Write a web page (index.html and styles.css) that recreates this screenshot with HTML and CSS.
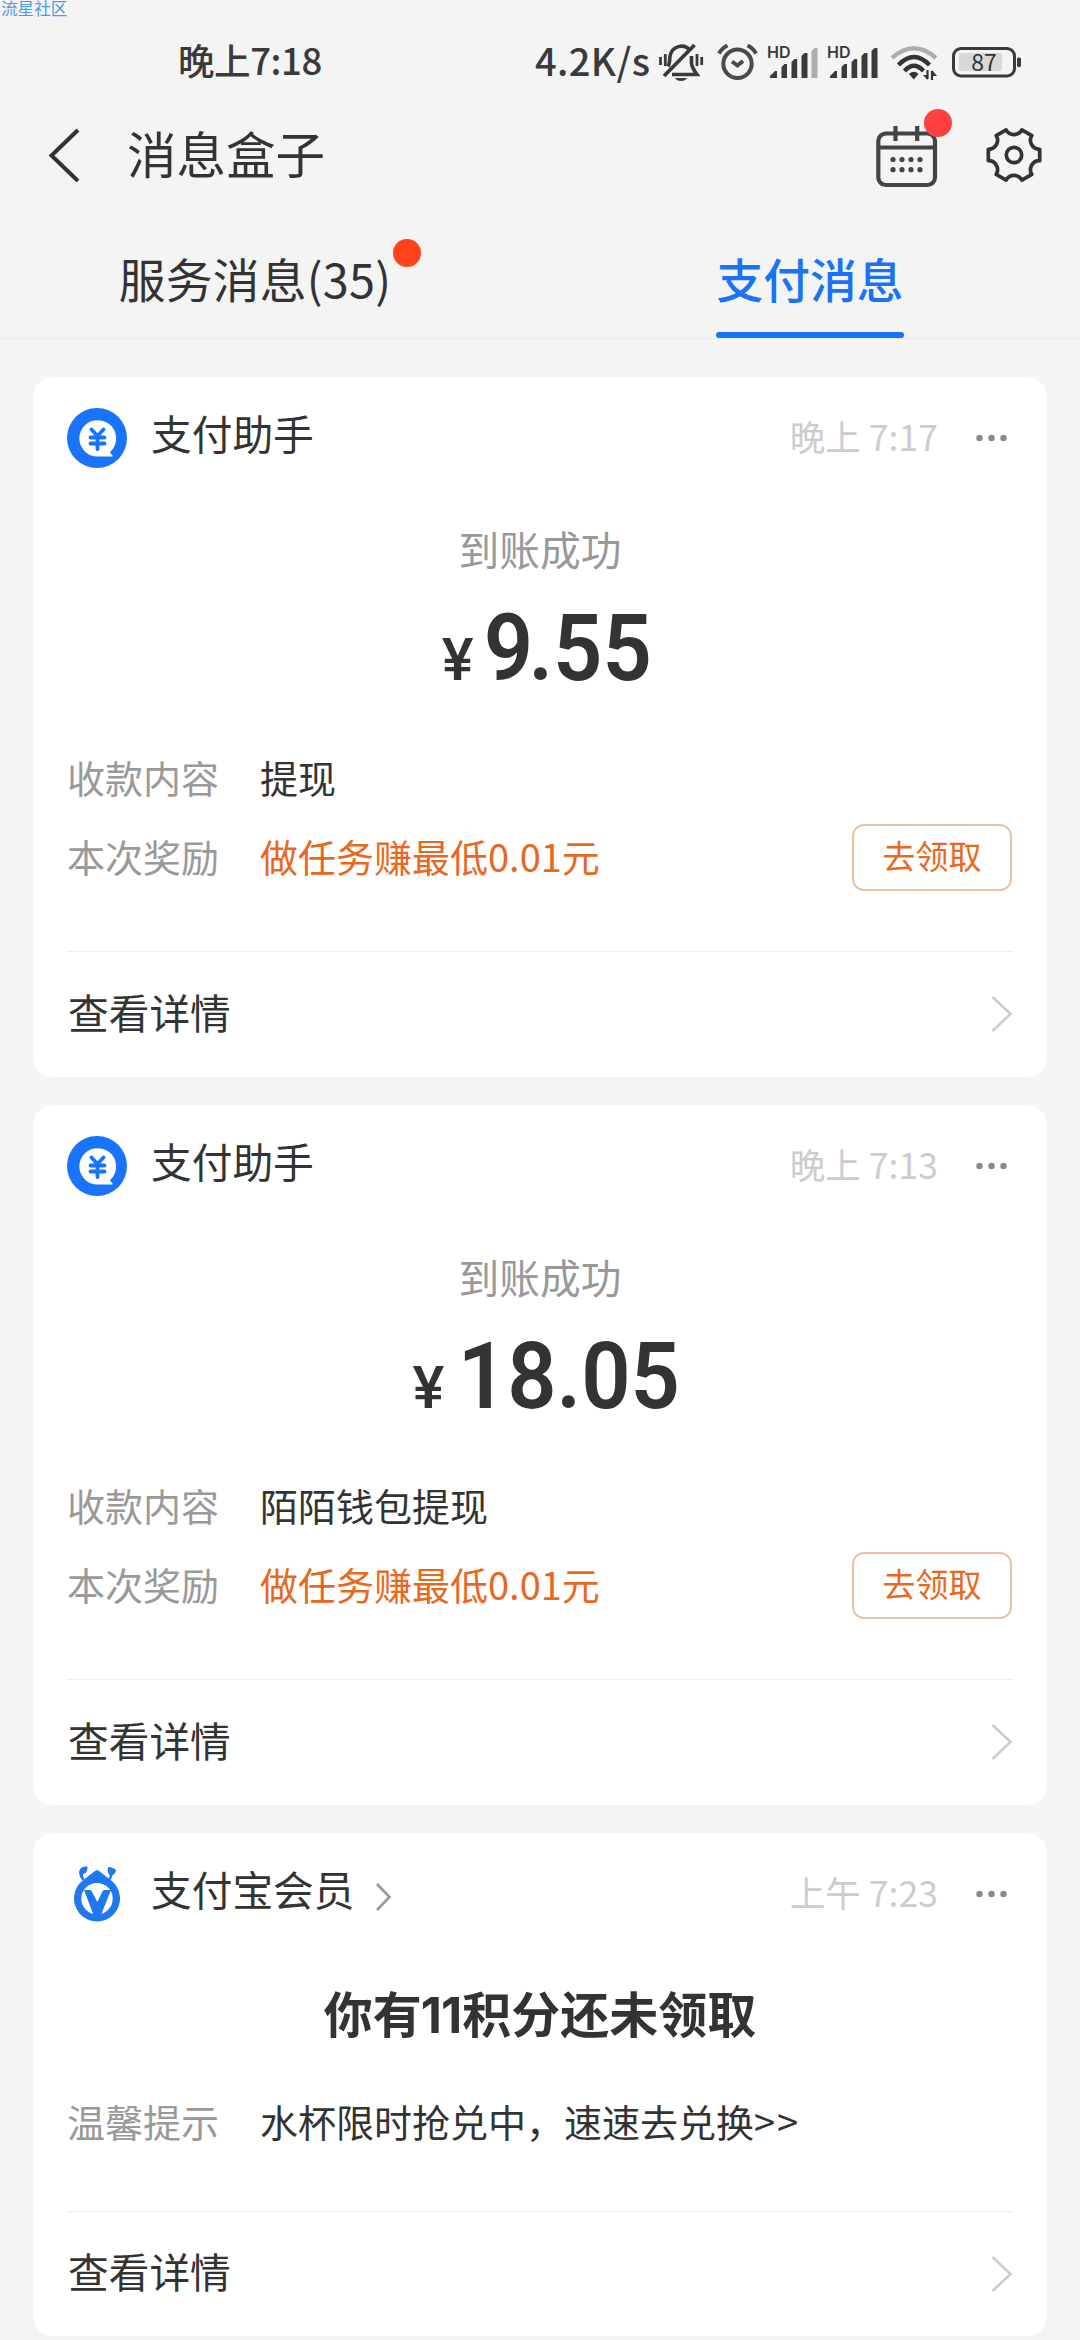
FILE: index.html
```html
<!DOCTYPE html>
<html lang="zh-CN">
<head>
<meta charset="utf-8">
<title>消息盒子</title>
<link rel="stylesheet" href="styles.css">
</head>
<body>
<svg class="defs" width="0" height="0" aria-hidden="true">
  <symbol id="pay" viewBox="0 0 60 60">
    <circle cx="30" cy="30" r="30" fill="#1a73fb"/>
    <path d="M30.500 12.200a18.200 18.200 0 1 0 0 36.400h14.200c1.300 0 1.200-1 .4-1.700l-2.200-2.700a18.200 18.200 0 0 0-12.400-32z" fill="#fff"/>
    <path d="M24.500 21.500l6 6.500 6-6.500M23.500 29.500h14M23.500 35.500h14M30.500 28v13" fill="none" stroke="#1a73fb" stroke-width="3.800" stroke-linecap="round"/>
  </symbol>
  <symbol id="next" viewBox="0 0 22 36">
    <path d="M1.500 1l18 17-18 17" fill="none" stroke="#ccc" stroke-width="2.600"/>
  </symbol>
  <symbol id="more" viewBox="0 0 38 8">
    <g fill="#8a8a8a"><circle cx="4.500" cy="4" r="3.200"/><circle cx="16.500" cy="4" r="3.200"/><circle cx="28.500" cy="4" r="3.200"/></g>
  </symbol>
</svg>

<div class="watermark">流星社区</div>

<div class="status">
  <span class="clock">晚上7:18</span>
  <span class="speed">4.2K/s</span>
  <svg class="i-mute" width="50" height="44" viewBox="656 40 50 44" fill="none" stroke="#3a3a3a" stroke-width="3.600">
    <path d="M664 76l30.500-31" stroke-width="3.800"/>
    <path d="M668 66.500c2-3 1.500-7 2-10.500 2-10 14-13 19.500-6M691.500 56v7c.5 5 3 8 5.500 11.500H672"/>
    <path d="M675 78h12c-2 4-10 4-12 0z" fill="#3a3a3a" stroke="none"/>
    <path d="M660.500 57v8M665.300 54v12M697 54v12M701.700 57v8" stroke-width="2.800"/>
  </svg>
  <svg class="i-alarm" width="42" height="44" viewBox="716 40 42 44" fill="none" stroke="#4a4a4a" stroke-width="4">
    <circle cx="737.500" cy="63.800" r="14.200"/>
    <path d="M719 53.500q3-5.500 8.500-8M747.500 45.500q5.500 2.500 8.500 8M732 61.500l5.500 4 5.500-4.500"/>
  </svg>
  <svg class="i-signal" width="54" height="44" viewBox="766 40 54 44" fill="#3a3a3a">
    <text class="hd" x="767" y="58">HD</text>
    <path d="M770 78v-2l5-5h2v7zM781.500 78V67l3-3h2.500v14zM791.500 78V62l3-3h2.700v19zM801.500 78V56l3-3h3v25z"/>
    <path d="M811.500 78V51l3-3h3v30z" fill="#adadad"/>
  </svg>
  <svg class="i-signal" width="54" height="44" viewBox="766 40 54 44" fill="#3a3a3a">
    <text class="hd" x="767" y="58">HD</text>
    <path d="M770 78v-2l5-5h2v7zM781.500 78V67l3-3h2.500v14zM791.500 78V62l3-3h2.700v19zM801.500 78V56l3-3h3v25zM811.500 78V51l3-3h3v30z"/>
  </svg>
  <svg class="i-wifi" width="50" height="44" viewBox="889 40 50 44" fill="none" stroke="#333" stroke-width="4.400">
    <path d="M892 58q22-19.500 44 0" stroke="#adadad"/>
    <path d="M898.500 65q15.500-16 31 0M904.500 71q9.500-10.500 19 0"/>
    <path d="M909 74q5-4.500 9.500 0l-4.700 5.500z" fill="#333" stroke="none"/>
    <path d="M927.500 70v9M932 80v-9" stroke-width="2.200"/>
    <path d="M923 75h4.500v5zM937 76h-5v-6z" fill="#333" stroke="none"/>
  </svg>
  <svg class="i-battery" width="72" height="44" viewBox="950 40 72 44">
    <rect x="953.500" y="48.500" width="61" height="27.500" rx="7.500" fill="none" stroke="#3a3a3a" stroke-width="3"/>
    <rect x="959" y="53" width="43" height="18" rx="2" fill="#d8d8d8"/>
    <rect x="1017" y="57.500" width="4" height="9.500" rx="1.500" fill="#3a3a3a"/>
    <text class="pct" x="984" y="70.500" text-anchor="middle">87</text>
  </svg>
</div>

<header class="bar">
  <svg width="34" height="54" viewBox="0 0 34 54"><path d="M32 2L5.500 27.500 32 53" fill="none" stroke="#333" stroke-width="4"/></svg>
  <h1 class="title">消息盒子</h1>
  <span class="cal">
    <svg width="64" height="64" viewBox="875 125 64 64" fill="none" stroke="#444" stroke-width="4.200">
      <rect x="878.300" y="133.500" width="56.700" height="51.500" rx="7.500"/>
      <path d="M878 147.500h57M895.500 126v15M917.200 126v15" />
      <g fill="#444" stroke="none"><circle cx="893" cy="159.500" r="2.600"/><circle cx="902" cy="159.500" r="2.600"/><circle cx="911" cy="159.500" r="2.600"/><circle cx="920" cy="159.500" r="2.600"/><circle cx="893" cy="169.700" r="2.600"/><circle cx="902" cy="169.700" r="2.600"/><circle cx="911" cy="169.700" r="2.600"/><circle cx="920" cy="169.700" r="2.600"/></g>
    </svg>
    <i class="dot cal-dot"></i>
  </span>
  <svg class="gear" width="60" height="60" viewBox="-30 -30 60 60" fill="none" stroke="#333" stroke-width="3.700" stroke-linejoin="round">
    <path d="M25.700-5.700V5.700A9 9 0 0 0 17.800 19.400L7.900 25.100A9 9 0 0 0-7.900 25.100L-17.800 19.400A9 9 0 0 0-25.700 5.700V-5.700A9 9 0 0 0-17.800-19.400L-7.900-25.100A9 9 0 0 0 7.900-25.100L17.800-19.400A9 9 0 0 0 25.700-5.700z"/>
    <circle r="7.700"/>
  </svg>
</header>

<nav class="tabs">
  <div class="tab"><span class="off">服务消息(35)</span><i class="dot tab-dot"></i></div>
  <div class="tab"><span class="on">支付消息</span></div>
</nav>

<main class="feed">
  <article class="card">
    <div class="head">
      <svg class="avatar"><use href="#pay"/></svg>
      <span class="name">支付助手</span>
      <span class="time">晚上 7:17</span>
      <svg class="more"><use href="#more"/></svg>
    </div>
    <div class="state">到账成功</div>
    <div class="amount"><span class="yen">¥</span><span class="num"><span class="kern">9</span>.55</span></div>
    <div class="row"><span class="key">收款内容</span><span class="val">提现</span></div>
    <div class="row"><span class="key">本次奖励</span><span class="val reward">做任务赚最低0.01元</span><span class="btn"><span>去领取</span></span></div>
    <div class="foot"><span class="link">查看详情</span><svg class="next"><use href="#next"/></svg></div>
  </article>

  <article class="card">
    <div class="head">
      <svg class="avatar"><use href="#pay"/></svg>
      <span class="name">支付助手</span>
      <span class="time">晚上 7:13</span>
      <svg class="more"><use href="#more"/></svg>
    </div>
    <div class="state">到账成功</div>
    <div class="amount"><span class="yen">¥</span><span class="num">18.05</span></div>
    <div class="row"><span class="key">收款内容</span><span class="val">陌陌钱包提现</span></div>
    <div class="row"><span class="key">本次奖励</span><span class="val reward">做任务赚最低0.01元</span><span class="btn"><span>去领取</span></span></div>
    <div class="foot"><span class="link">查看详情</span><svg class="next"><use href="#next"/></svg></div>
  </article>

  <article class="card">
    <div class="head">
      <svg class="avatar" viewBox="0 0 60 60" fill="#1f78f0">
        <path fill-rule="evenodd" d="M30 6Q32 6.500 34 8.500L43 15.500A23 23 0 1 1 17 15.500L26 8.500Q28 6.500 30 6zM30 19a15.700 15.700 0 1 0 0 31.400a15.700 15.700 0 0 0 0-31.400z"/>
        <path d="M17 26h5.500q1.500 0 2.200 1.300L30.300 38l5.200-10.700Q36.200 26 37.700 26H44L34 51h-7.500z"/>
        <path d="M20.500 2.800c-5-1-8.500 1.700-8.300 6.200.1 3 1.200 5.200 3.300 7.500l2-1.500c-1.300-2-1.700-3-1.500-5 3 0 4.500-3 4.500-7.200zM41 3c3.500.3 6 1.200 8 3-.5 3-2 4.500-4 5.500 0 2-.5 3.500-2 5l-1.700-1.500c1.200-1.500 1.500-2.500 1.200-4-1.800-2.300-2.300-4.700-1.500-8z"/>
      </svg>
      <span class="name">支付宝会员</span>
      <svg class="chev" width="16" height="28" viewBox="0 0 16 28"><path d="M1 1l12.500 13L1 27" fill="none" stroke="#999" stroke-width="2.600"/></svg>
      <span class="time">上午 7:23</span>
      <svg class="more"><use href="#more"/></svg>
    </div>
    <h2 class="headline">你有<span class="ones">11</span>积分还未领取</h2>
    <div class="row"><span class="key">温馨提示</span><span class="val">水杯限时抢兑中，速速去兑换<span class="arrows">&gt;&gt;</span></span></div>
    <div class="foot short"><span class="link">查看详情</span><svg class="next"><use href="#next"/></svg></div>
  </article>
</main>
</body>
</html>
```
FILE: styles.css
```css
* { box-sizing: border-box; margin: 0; padding: 0; }

body {
  position: relative;
  width: 1080px;
  height: 2340px;
  overflow: hidden;
  background: #f4f4f4;
  color: #333;
  font-family: "Noto Sans CJK SC", sans-serif;
  white-space: nowrap;
}

svg { display: block; flex: none; }
.defs { position: absolute; }
.dot { display: block; border-radius: 50%; }

.watermark {
  position: absolute;
  left: 1px;
  top: 0;
  font-size: 16.6px;
  line-height: 16px;
  color: #4a9bea;
}

/* status bar */
.status {
  display: flex;
  align-items: center;
  height: 84px;
  padding: 40px 0 0 178px;
}
.clock, .speed { line-height: 40px; margin-top: -4px; font-weight: 500; color: #3a3a3a; }
.clock { width: 357px; font-size: 36.5px; letter-spacing: -0.4px; }
.speed { width: 121px; font-size: 38px; letter-spacing: 0.4px; }
.i-alarm { margin-left: 10px; }
.i-signal { margin-left: 8px; }
.i-signal + .i-signal { margin-left: 6px; }
.i-wifi { margin-left: 9px; }
.i-battery { margin-left: 11px; }
.hd { font: 600 16px Inter, sans-serif; }
.pct { font: 400 23px "Noto Sans CJK SC", sans-serif; fill: #333; }

/* title bar */
.bar {
  display: flex;
  align-items: center;
  height: 142px;
  padding: 0 36px 0 46px;
}
.title { margin: -4px auto 0 47px; font-size: 49.5px; font-weight: 400; line-height: 60px; }
.cal { position: relative; }
.cal svg { margin-top: 4px; }
.cal-dot { position: absolute; left: 49px; top: -12px; width: 28px; height: 28px; background: #ff4040; }
.gear { margin-left: 45px; }

/* tabs */
.tabs {
  display: flex;
  height: 113px;
  border-bottom: 1px solid #ebebeb;
  font-size: 46.8px;
  line-height: 103px;
}
.tab { flex: 1; display: flex; justify-content: center; }
.off { letter-spacing: 0.2px; }
.tab-dot { width: 28px; height: 28px; margin: 13px 0 0 2px; background: #ff411c; }
.on { position: relative; color: #1a73f5; font-weight: 500; }
.on::after {
  content: "";
  position: absolute;
  left: 0;
  right: 0;
  bottom: 0;
  height: 6px;
  border-radius: 3px;
  background: #1a73f5;
}

/* cards */
.feed { display: flex; flex-direction: column; gap: 28.5px; padding: 38px 33px 0; }
.card { padding: 0 34px; border-radius: 20px; background: #fff; }
.head { display: flex; align-items: center; height: 122px; }
.avatar { width: 60px; height: 60px; }
.name { margin: -10px 0 0 24px; font-size: 40.7px; line-height: 60px; }
.chev { margin: 6px 0 0 22px; }
.time { margin: -4px 0 0 auto; font-size: 35.6px; line-height: 50px; color: #ccc; }
.more { width: 38px; height: 8px; margin-left: 37px; }

.state {
  margin-top: 22px;
  height: 56px;
  font-size: 40.7px;
  line-height: 56px;
  text-align: center;
  color: #999;
}
.amount {
  display: flex;
  justify-content: center;
  align-items: baseline;
  height: 100px;
  margin: 22px 0 41px;
  padding-left: 13px;
  font-family: Roboto, sans-serif;
  line-height: 100px;
}
.yen { margin-right: -3px; font-size: 60px; font-weight: 500; }
.num {
  font-size: 93px;
  font-weight: 600;
  transform: scaleX(0.93);
  transform-origin: right;
}
.kern { letter-spacing: -5px; }

.row { display: flex; align-items: center; height: 78.5px; font-size: 38px; line-height: 60px; }
.key { width: 193px; color: #999; }
.reward { color: #e9681f; }
.key, .val { margin-top: -4px; }
.arrows { letter-spacing: 2px; }
.btn {
  width: 160px;
  height: 67px;
  margin: 0 1px 0 auto;
  border: 2px solid #edc2a4;
  border-radius: 12px;
  font-size: 33px;
  line-height: 59px;
  text-align: center;
  color: #e9681f;
}

.foot {
  display: flex;
  justify-content: space-between;
  align-items: center;
  height: 125.5px;
  margin-top: 54px;
  border-top: 1px solid #eee;
}
.link { margin: -5px 0 0 1px; font-size: 40.7px; line-height: 60px; }
.next { width: 22px; height: 36px; }

.headline {
  margin-top: 22px;
  height: 70px;
  font-size: 49px;
  line-height: 70px;
  font-weight: 700;
  text-align: center;
}
.ones { margin: 0 1px 0 -1px; font-family: Inter, sans-serif; letter-spacing: -1px; }
.headline + .row { margin-top: 37px; }
.foot.short { margin-top: 48px; }
```
